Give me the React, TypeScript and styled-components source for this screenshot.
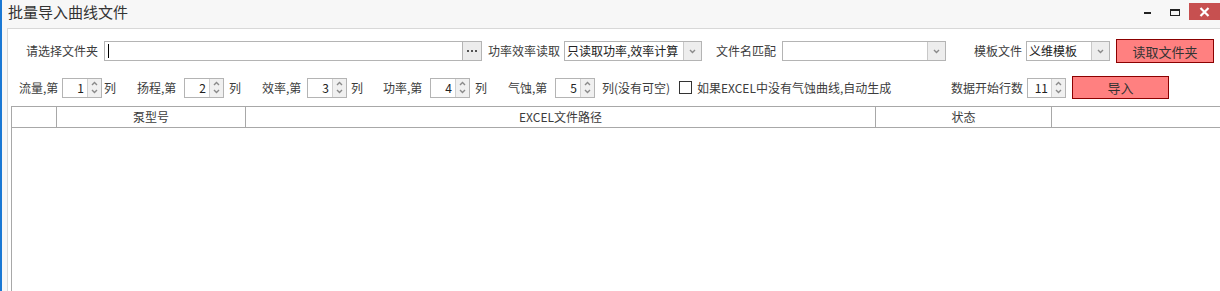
import React from "react";
import styled, { createGlobalStyle } from "styled-components";

const GlobalStyle = createGlobalStyle`
  html, body {
    margin: 0;
    padding: 0;
    background: #f7f7f7;
  }
  body {
    font-family: "Noto Sans CJK SC", "Noto Sans", sans-serif;
    font-size: 12px;
    color: #3c3c3c;
  }
`;

const Chevron: React.FC<{ up?: boolean }> = ({ up }) => (
  <svg width="7" height="5" viewBox="0 0 7 5">
    <path
      d={up ? "M1 4 L3.5 1.5 L6 4" : "M1 1 L3.5 3.5 L6 1"}
      fill="none"
      stroke="#8a8a8a"
      strokeWidth="1.4"
    />
  </svg>
);

const SpinBox: React.FC<{ value: number; w?: number }> = ({ value, w = 40 }) => (
  <Spin $w={w}>
    <SpinValue>{value}</SpinValue>
    <SpinArrows>
      <Chevron up />
      <Chevron />
    </SpinArrows>
  </Spin>
);

const Combo: React.FC<{ w: number; text?: string }> = ({ w, text }) => (
  <Select $w={w}>
    <SelectText>{text}</SelectText>
    <SelectArrow>
      <Chevron />
    </SelectArrow>
  </Select>
);

export default function App() {
  return (
    <>
      <GlobalStyle />
      <Window>
        <TitleBar>
          <Title>批量导入曲线文件</Title>
          <Controls>
            <MinBtn>
              <span />
            </MinBtn>
            <MaxBtn>
              <span />
            </MaxBtn>
            <CloseBtn>
              <svg width="11" height="10" viewBox="0 0 11 10">
                <path d="M1.5 1 L9.5 9 M9.5 1 L1.5 9" stroke="#fff" strokeWidth="2.2" />
              </svg>
            </CloseBtn>
          </Controls>
        </TitleBar>

        <Content>
          <Row $top={10} $h={24}>
            <Label $ml={18} $w={78}>请选择文件夹</Label>
            <PathInput>
              <Caret />
            </PathInput>
            <DotsButton>
              <svg width="11" height="3" viewBox="0 0 11 3">
                <rect x="0" y="0" width="2" height="2" fill="#555" />
                <rect x="4" y="0" width="2" height="2" fill="#555" />
                <rect x="8" y="0" width="2" height="2" fill="#555" />
              </svg>
            </DotsButton>
            <Label $ml={6} $w={76}>功率效率读取</Label>
            <Combo w={138} text="只读取功率,效率计算" />
            <Label $ml={14} $w={66}>文件名匹配</Label>
            <Combo w={164} />
            <Label $ml={28} $w={52}>模板文件</Label>
            <Combo w={84} text="义维模板" />
            <RedButton $ml={6} $w={98} $h={24}>读取文件夹</RedButton>
          </Row>

          <Row $top={13} $h={23}>
            <Label $ml={11} $w={43}>流量,第</Label>
            <SpinBox value={1} />
            <Label $ml={2} $w={33}>列</Label>
            <Label $w={47}>扬程,第</Label>
            <SpinBox value={2} />
            <Label $ml={5} $w={33}>列</Label>
            <Label $w={45}>效率,第</Label>
            <SpinBox value={3} />
            <Label $ml={4} $w={32}>列</Label>
            <Label $w={47}>功率,第</Label>
            <SpinBox value={4} />
            <Label $ml={5} $w={33}>列</Label>
            <Label $w={47}>气蚀,第</Label>
            <SpinBox value={5} />
            <Label $ml={7} $w={77}>列(没有可空)</Label>
            <CheckBox />
            <Label $ml={5} $w={254}>如果EXCEL中没有气蚀曲线,自动生成</Label>
            <Label $w={76}>数据开始行数</Label>
            <SpinBox value={11} w={39} />
            <RedButton $ml={6} $w={97} $h={23}>导入</RedButton>
          </Row>

          <Grid>
            <HeaderRow>
              <HeadCell $w={45} />
              <HeadCell $w={189}>泵型号</HeadCell>
              <HeadCell $w={630}>EXCEL文件路径</HeadCell>
              <HeadCell $w={176}>状态</HeadCell>
              <HeadCell $w={200} $last />
            </HeaderRow>
            <GridBody />
          </Grid>
        </Content>
      </Window>
    </>
  );
}

/* Styled components */
const Window = styled.div`
  width: 1220px;
  height: 291px;
  box-sizing: border-box;
  border-left: 2px solid #1a78d4;
  background: #f7f7f7;
  display: flex;
  flex-direction: column;
  overflow: hidden;
`;

const TitleBar = styled.div`
  height: 28px;
  flex: none;
  display: flex;
  align-items: flex-start;
  justify-content: space-between;
`;

const Title = styled.div`
  margin: 2px 0 0 6px;
  font-size: 15px;
  line-height: 20px;
  color: #333;
`;

const Controls = styled.div`
  display: flex;
  align-items: flex-start;
`;

const MinBtn = styled.div`
  width: 26px;
  height: 20px;
  position: relative;
  span {
    position: absolute;
    left: 0;
    top: 12px;
    width: 7px;
    height: 2px;
    background: #222;
  }
`;

const MaxBtn = styled.div`
  width: 19px;
  height: 20px;
  position: relative;
  span {
    position: absolute;
    left: 0;
    top: 9px;
    width: 10px;
    height: 7px;
    box-sizing: border-box;
    border: 1px solid #222;
    border-top-width: 2px;
  }
`;

const CloseBtn = styled.div`
  width: 31px;
  height: 17px;
  margin-top: 3px;
  background: #c75050;
  display: flex;
  align-items: center;
  justify-content: center;
`;

const Content = styled.div`
  flex: 1;
  margin-left: 5px;
  background: #fff;
  border-top: 1px solid #d8d8d8;
  border-left: 1px solid #d8d8d8;
  display: flex;
  flex-direction: column;
`;

const Row = styled.div<{ $top: number; $h: number }>`
  display: flex;
  align-items: center;
  margin-top: ${(p) => p.$top}px;
  height: ${(p) => p.$h}px;
  flex: none;
`;

const Label = styled.div<{ $ml?: number; $w: number }>`
  margin-left: ${(p) => p.$ml ?? 0}px;
  width: ${(p) => p.$w}px;
  flex: none;
  white-space: nowrap;
  line-height: 20px;
  color: #3c3c3c;
`;

const PathInput = styled.div`
  width: 359px;
  height: 20px;
  box-sizing: border-box;
  border: 1px solid #b4b4b4;
  display: flex;
  align-items: center;
  padding-left: 3px;
  flex: none;
`;

const Caret = styled.span`
  width: 1px;
  height: 14px;
  background: #000;
`;

const DotsButton = styled.div`
  width: 19px;
  height: 20px;
  box-sizing: border-box;
  border: 1px solid #b4b4b4;
  border-left: none;
  background: #ececec;
  display: flex;
  align-items: center;
  justify-content: center;
  flex: none;
`;

const Select = styled.div<{ $w: number }>`
  width: ${(p) => p.$w}px;
  height: 20px;
  box-sizing: border-box;
  border: 1px solid #b4b4b4;
  display: flex;
  flex: none;
`;

const SelectText = styled.div`
  flex: 1;
  padding-left: 2px;
  line-height: 18px;
  white-space: nowrap;
  overflow: hidden;
  color: #222;
`;

const SelectArrow = styled.div`
  width: 17px;
  border-left: 1px solid #c8c8c8;
  background: #ededed;
  display: flex;
  align-items: center;
  justify-content: center;
`;

const Spin = styled.div<{ $w: number }>`
  width: ${(p) => p.$w}px;
  height: 20px;
  box-sizing: border-box;
  border: 1px solid #b4b4b4;
  display: flex;
  flex: none;
`;

const SpinValue = styled.div`
  flex: 1;
  text-align: right;
  padding-right: 3px;
  line-height: 18px;
  color: #222;
`;

const SpinArrows = styled.div`
  width: 13px;
  border-left: 1px solid #d0d0d0;
  background: #f0f0f0;
  display: flex;
  flex-direction: column;
  align-items: center;
  justify-content: center;
  gap: 3px;
`;

const RedButton = styled.div<{ $ml: number; $w: number; $h: number }>`
  margin-left: ${(p) => p.$ml}px;
  width: ${(p) => p.$w}px;
  height: ${(p) => p.$h}px;
  box-sizing: border-box;
  border: 1px solid #8b0000;
  background: #ff8080;
  color: #333;
  font-size: 13px;
  display: flex;
  align-items: center;
  justify-content: center;
  flex: none;
`;

const CheckBox = styled.div`
  width: 13px;
  height: 13px;
  box-sizing: border-box;
  border: 1px solid #333;
  background: #fff;
  flex: none;
`;

const Grid = styled.div`
  margin: 7px 0 0 3px;
  flex: 1;
  border-left: 1px solid #a8a8a8;
  display: flex;
  flex-direction: column;
`;

const HeaderRow = styled.div`
  display: flex;
  height: 22px;
  box-sizing: border-box;
  border-top: 1px solid #a8a8a8;
  border-bottom: 1px solid #a8a8a8;
  flex: none;
`;

const HeadCell = styled.div<{ $w: number; $last?: boolean }>`
  width: ${(p) => p.$w}px;
  flex: none;
  box-sizing: border-box;
  border-right: ${(p) => (p.$last ? "none" : "1px solid #a8a8a8")};
  text-align: center;
  line-height: 20px;
  color: #3c3c3c;
`;

const GridBody = styled.div`
  flex: 1;
  background: #fff;
`;
